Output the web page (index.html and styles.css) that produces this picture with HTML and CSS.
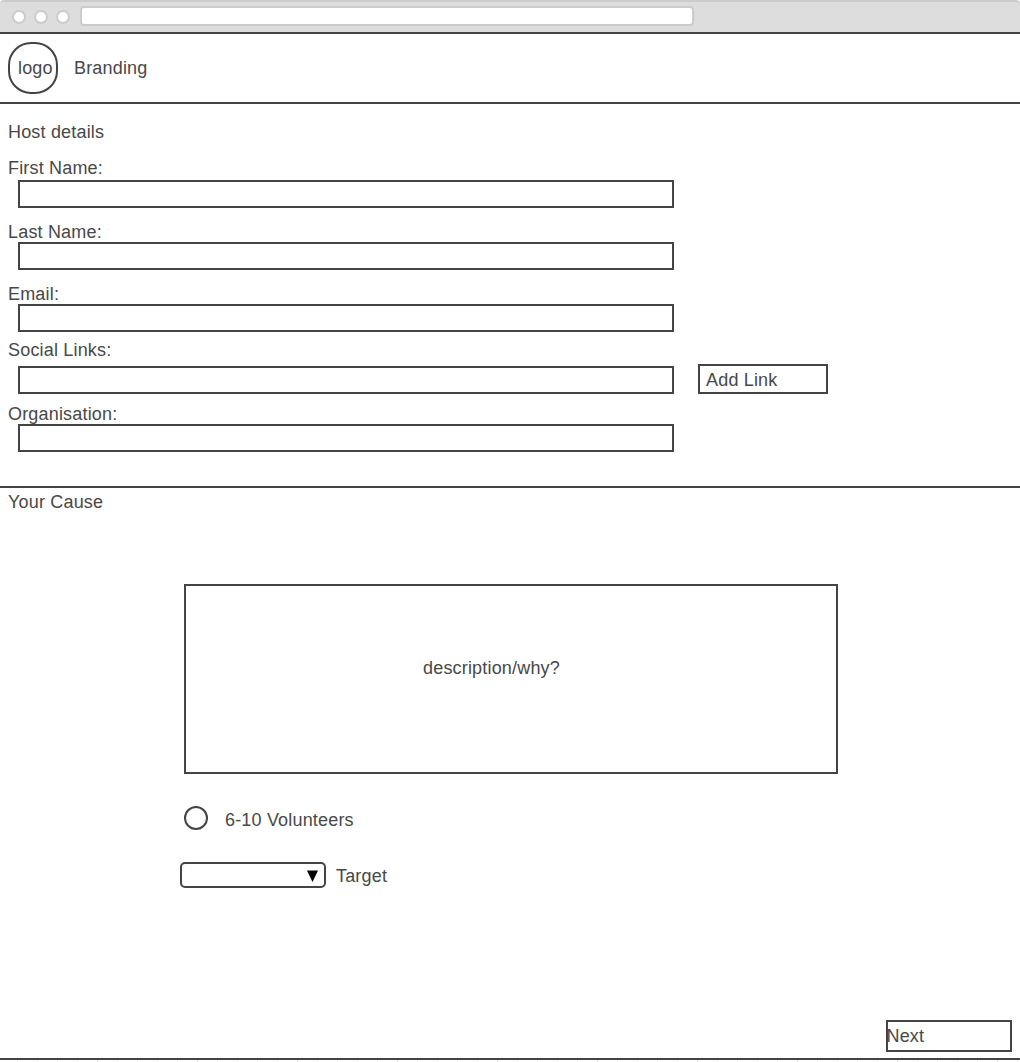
FILE: index.html
```html
<!DOCTYPE html>
<html lang="en">
<head>
<meta charset="utf-8">
<title>Branding</title>
<link rel="stylesheet" href="styles.css">
</head>
<body>
<div class="window-bar">
  <span class="dot"></span><span class="dot"></span><span class="dot"></span>
  <span class="address"></span>
</div>
<header class="brand">
  <div class="logo">logo</div>
  <span>Branding</span>
</header>
<section class="host">
  <div class="heading">Host details</div>
  <div class="field first"><label for="first">First Name:</label><input id="first" class="box"></div>
  <div class="field"><label for="last">Last Name:</label><input id="last" class="box"></div>
  <div class="field"><label for="email">Email:</label><input id="email" class="box"></div>
  <div class="field social">
    <label for="social">Social Links:</label>
    <div class="link-row"><input id="social" class="box"><button class="add">Add Link</button></div>
  </div>
  <div class="field organisation"><label for="org">Organisation:</label><input id="org" class="box"></div>
</section>
<section class="cause">
  <div class="heading">Your Cause</div>
  <div class="description">description/why?</div>
  <div class="option"><span class="radio"></span><span class="option-label">6-10 Volunteers</span></div>
  <div class="target">
    <span class="select"><svg width="12" height="12" viewBox="0 0 12 12"><path d="M0 0.5H11L5.5 12Z"/></svg></span>
    <span class="target-label">Target</span>
  </div>
  <button class="next">Next</button>
</section>
<div class="ruler"></div>
</body>
</html>
```
FILE: styles.css
```css
* { box-sizing: border-box; }

body {
  margin: 0;
  height: 1062px;
  overflow: hidden;
  background: #fff;
  color: #484848;
  font: 18px/20px "Liberation Sans", Arial, sans-serif;
  letter-spacing: 0.18px;
}

.window-bar {
  display: flex;
  height: 32px;
  padding: 4px 0 0 12px;
  background: #ddd;
  border-top: 2px solid #ccc;
  border-radius: 4px 4px 0 0;
}

.dot {
  width: 14px;
  height: 14px;
  margin: 4px 8px 0 0;
  background: #fff;
  border: 2px solid #ccc;
  border-radius: 50%;
}

.address {
  width: 614px;
  height: 20px;
  margin-left: 2px;
  background: #fff;
  border: 2px solid #ccc;
  border-radius: 4px;
}

.brand {
  display: flex;
  gap: 16px;
  height: 72px;
  padding: 8px;
  border-top: 2px solid #444;
  border-bottom: 2px solid #444;
}

.brand span { margin-top: 16px; }

.logo {
  width: 50px;
  height: 52px;
  padding: 14px 0 0 8px;
  border: 2px solid #444;
  border-radius: 23px;
}

.host {
  height: 384px;
  padding: 18px 8px 0;
  border-bottom: 2px solid #444;
}

.heading { height: 20px; }

.field {
  display: flex;
  flex-direction: column;
  margin-top: 14px;
}

.field.first { gap: 2px; margin-top: 16px; }
.field.social { gap: 4px; margin-top: 8px; }
.field.organisation { margin-top: 10px; }

.box {
  width: 656px;
  height: 28px;
  margin: 0 0 0 10px;
  padding: 0 6px;
  background: #fff;
  border: 2px solid #444;
  border-radius: 0;
  color: inherit;
  font: inherit;
}

.link-row {
  display: flex;
  align-items: flex-end;
  gap: 24px;
}

.add,
.next {
  margin: 0;
  background: #fff;
  border: 2px solid #444;
  border-radius: 0;
  color: inherit;
  font: inherit;
  letter-spacing: inherit;
  text-align: left;
}

.add {
  width: 130px;
  height: 30px;
  padding: 2px 0 0 6px;
}

.cause {
  display: flex;
  flex-direction: column;
  height: 572px;
  padding: 4px 8px 6px;
  border-bottom: 2px solid #444;
}

.description {
  width: 654px;
  height: 190px;
  margin: 72px 0 0 176px;
  padding: 72px 0 0 237px;
  border: 2px solid #444;
}

.option {
  display: flex;
  gap: 17px;
  height: 24px;
  margin: 32px 0 0 176px;
}

.option-label { margin-top: 4px; }

.radio {
  width: 24px;
  height: 24px;
  border: 2px solid #444;
  border-radius: 50%;
}

.target {
  display: flex;
  gap: 10px;
  height: 26px;
  margin: 32px 0 0 172px;
}

.target-label { margin-top: 4px; }

.select {
  display: flex;
  justify-content: flex-end;
  width: 146px;
  height: 26px;
  padding: 6px 5px 0 0;
  border: 2px solid #444;
  border-radius: 5px;
}

.select svg { fill: #000; }

.next {
  align-self: flex-end;
  width: 126px;
  height: 32px;
  margin-top: auto;
  padding: 0;
  text-indent: -1.5px;
}

.ruler {
  height: 2px;
  background:
    repeating-linear-gradient(to right, transparent 0 97px, #ddd 97px 98px, transparent 98px 100px),
    repeating-linear-gradient(to right, transparent 0 17px, #eee 17px 18px, transparent 18px 20px);
}
```
